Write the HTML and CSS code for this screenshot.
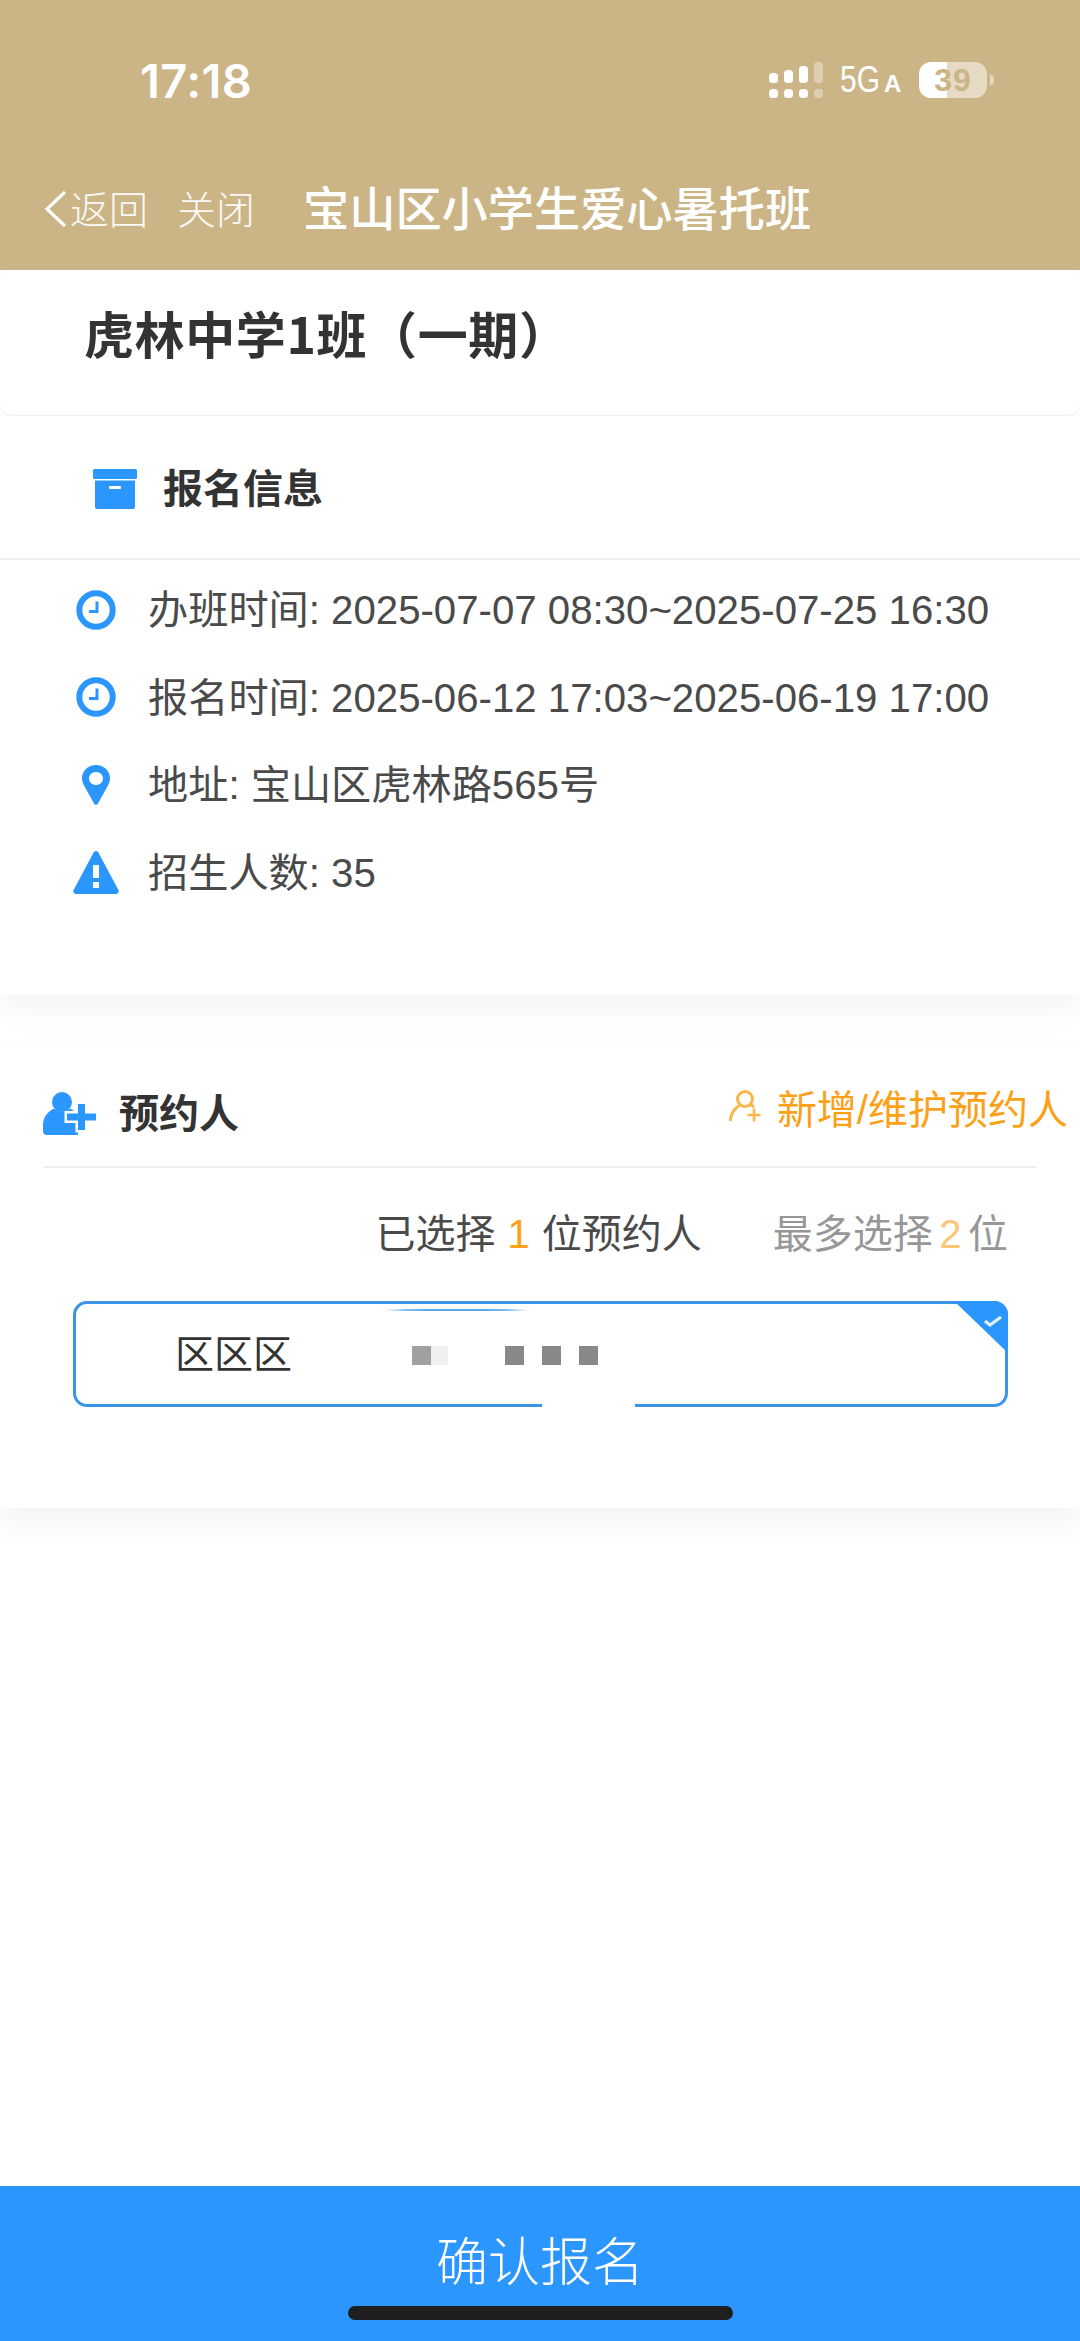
FILE: index.html
```html
<!DOCTYPE html>
<html lang="zh">
<head>
<meta charset="utf-8">
<title>宝山区小学生爱心暑托班</title>
<link rel="stylesheet" href="styles.css">
</head>
<body>
<div class="page">
  <header class="top">
    <div class="status">
      <span class="time">17:18</span>
      <div class="status-right">
        <svg class="signal" width="54" height="36" viewBox="0 0 54 36">
          <g fill="#fff">
            <rect x="0" y="11" width="9" height="10" rx="3.5"/><rect x="15" y="8" width="9" height="13" rx="3.5"/><rect x="30" y="4" width="9" height="17" rx="3.5"/>
            <rect x="0" y="27" width="9" height="9" rx="3.5"/><rect x="15" y="27" width="9" height="9" rx="3.5"/><rect x="30" y="27" width="9" height="9" rx="3.5"/>
          </g>
          <g fill="#fff" opacity=".35"><rect x="45" y="0" width="9" height="21" rx="3.5"/><rect x="45" y="27" width="9" height="9" rx="3.5"/></g>
        </svg>
        <span class="net"><span class="net-5g">5G</span><small>A</small></span>
        <span class="battery">39</span>
        <span class="tip"></span>
      </div>
    </div>
    <nav class="navbar">
      <svg class="chev" width="24" height="38" viewBox="0 0 24 38"><path d="M21 2 3 19l18 17" fill="none" stroke="#fff" stroke-width="3.2"/></svg>
      <span class="nav-link back">返回</span>
      <span class="nav-link close">关闭</span>
      <span class="nav-title">宝山区小学生爱心暑托班</span>
    </nav>
  </header>

  <section class="title-card"><h1>虎林中学1班（一期）</h1></section>

  <section class="info-card">
    <div class="info-head">
      <svg width="44" height="40" viewBox="0 0 44 40"><rect x="0" y="0" width="44" height="10" rx="1.5" fill="#2b96fd"/><path d="M2 11.500h40v26.500a2 2 0 0 1-2 2H4a2 2 0 0 1-2-2z" fill="#2b96fd"/><rect x="16" y="17" width="12" height="3" rx="1" fill="#fff"/></svg>
      <h2>报名信息</h2>
    </div>
    <ul class="rows">
      <li class="row">
        <span class="ico"><svg width="40" height="40" viewBox="0 0 40 40"><circle cx="20" cy="20" r="16.700" fill="none" stroke="#2b96fd" stroke-width="6"/><path d="M21 11.500v10H13" fill="none" stroke="#2b96fd" stroke-width="3"/></svg></span>
        <span class="row-text">办班时间: 2025-07-07 08:30~2025-07-25 16:30</span>
      </li>
      <li class="row">
        <span class="ico"><svg width="40" height="40" viewBox="0 0 40 40"><circle cx="20" cy="20" r="16.700" fill="none" stroke="#2b96fd" stroke-width="6"/><path d="M21 11.500v10H13" fill="none" stroke="#2b96fd" stroke-width="3"/></svg></span>
        <span class="row-text">报名时间: 2025-06-12 17:03~2025-06-19 17:00</span>
      </li>
      <li class="row">
        <span class="ico"><svg width="28" height="40" viewBox="0 0 28 40"><path fill-rule="evenodd" d="M14 0c7.700 0 14 5.800 14 13.200 0 3.400-1.300 6-3 9L16 38.500c-.9 1.800-3.100 1.800-4 0L3 22.200c-1.700-3-3-5.600-3-9C0 5.800 6.300 0 14 0zm0 7c-3.900 0-7 2.900-7 6.500s3.100 6.500 7 6.500 7-2.900 7-6.500S17.900 7 14 7z" fill="#2b96fd"/></svg></span>
        <span class="row-text">地址: 宝山区虎林路565号</span>
      </li>
      <li class="row">
        <span class="ico"><svg width="46" height="43" viewBox="0 0 46 43"><path fill-rule="evenodd" d="M23 0c1 0 1.800.6 2.400 1.600l20 37.400c.9 1.800-.2 4-2.200 4H2.800c-2 0-3.100-2.200-2.200-4l20-37.400C21.200.6 22 0 23 0zm-3 14v13h6V14zm0 17v6h6v-6z" fill="#2b96fd"/></svg></span>
        <span class="row-text">招生人数: 35</span>
      </li>
    </ul>
  </section>

  <section class="people-card">
    <div class="people-head">
      <div class="people-title">
        <svg width="54" height="44" viewBox="0 0 54 44"><circle cx="19" cy="10" r="10" fill="#2b96fd"/><path d="M4 43c-2.500 0-4-1.500-4-4v-6c0-8 5-13.500 11-16.500 4.500 4 11.500 4 16 0 3.500 1.500 6 4 8 7.500v19z" fill="#2b96fd"/><path d="M35 12h7v9.500h11v7H42V38h-7v-9.500H24v-7h11z" fill="#2b96fd" stroke="#fff" stroke-width="5" paint-order="stroke"/></svg>
        <h2>预约人</h2>
      </div>
      <div class="people-link">
        <svg width="34" height="34" viewBox="0 0 34 34"><g fill="none" stroke="#fbb64a" stroke-width="3"><circle cx="16" cy="9" r="7.500"/><path d="M10 15.500C5.500 18.500 2 24 1 31M22 15l3 2"/><path d="M25 18.500v13M18.500 25h13" stroke-width="2.600"/></g></svg>
        <span>新增/维护预约人</span>
      </div>
    </div>
    <div class="counts">
      <span class="count-a">已选择<b class="n1">1</b>位预约人</span>
      <span class="count-b">最多选择<b class="n2">2</b>位</span>
    </div>
    <div class="person">
      <span class="name">区区区</span>
      <span class="mask">
        <i class="sq half"></i><i class="sq faint"></i><i class="sq"></i><i class="sq"></i><i class="sq"></i>
      </span>
      <i class="smear"></i>
      <i class="erase"></i>
      <span class="corner"><svg width="54" height="52" viewBox="0 0 54 52"><path d="M0 0h40a14 14 0 0 1 14 14v38z" fill="#2b96fd"/><path d="M31 20l5 4 11-8" fill="none" stroke="#fff" stroke-opacity=".85" stroke-width="3.200"/></svg></span>
    </div>
  </section>

  <footer class="submit">
    <span>确认报名</span>
    <i class="home"></i>
  </footer>
</div>
</body>
</html>
```
FILE: styles.css
```css
* { box-sizing: border-box; }
html, body { margin: 0; padding: 0; background: #fff; }
body { font-family: "Liberation Sans", "Noto Sans CJK SC", sans-serif; color: #4a4a4a; }
h1, h2, ul { margin: 0; padding: 0; }
li { list-style: none; }

.page { width: 1080px; height: 2341px; display: flex; flex-direction: column; overflow: hidden; position: relative; }

.top { height: 270px; background: #cbb586; color: #fff; flex: none; }
.status { height: 160px; display: flex; justify-content: space-between; padding: 58px 86px 0 140px; }
.time { font-family: Inter, "Liberation Sans", sans-serif; font-size: 47px; font-weight: 600; line-height: 46px; letter-spacing: .4px; }
.status-right { display: flex; align-items: flex-start; height: 40px; padding-top: 1px; }
.signal { margin-top: 3px; }
.net { display: flex; align-items: baseline; font-size: 37px; line-height: 40px; margin-left: 17px; margin-top: 1px; width: 64px; }
.net-5g { display: inline-block; transform: scaleX(.81); transform-origin: left; width: 41px; }
.net small { font-size: 24px; font-weight: 700; margin-left: 3px; }
.battery { width: 68px; height: 36px; margin-left: 15px; margin-top: 3px; border-radius: 12px; background: linear-gradient(90deg, #fff 0 28px, #e5dac3 28px); color: #cbb586; font-size: 32px; font-weight: 700; line-height: 36px; text-align: center; letter-spacing: 1px; }
.tip { width: 4px; height: 10px; margin: 16px 0 0 3px; background: #e5dac3; border-radius: 0 5px 5px 0; }

.navbar { height: 110px; display: flex; align-items: flex-start; padding: 32px 0 0 44px; }
.chev { margin-top: -2px; }
.nav-link { font-family: "Noto Sans CJK SC", sans-serif; font-size: 39px; line-height: 38px; margin-top: -4px; opacity: .92; font-weight: 300; }
.back { margin-left: 2px; }
.close { margin-left: 29px; }
.nav-title { font-family: "Noto Sans CJK SC", sans-serif; font-size: 46.200px; line-height: 46px; font-weight: 500; margin-left: 48px; margin-top: -9px; }

.title-card { height: 145px; flex: none; padding: 37px 0 0 84px; border-radius: 12px; background: #fff; box-shadow: 0 1px 3px rgba(0,0,0,.08); position: relative; }
.title-card h1 { font-family: "Noto Sans CJK SC", sans-serif; font-size: 50px; line-height: 50px; font-weight: 600; letter-spacing: .6px; color: #333; }

.info-card { height: 579px; flex: none; margin-top: 1px; background: #fff; box-shadow: 0 12px 28px rgba(0,0,0,.05); position: relative; }
.info-head { height: 144px; display: flex; align-items: flex-start; padding: 53px 0 0 93px; border-bottom: 2px solid #eceef0; }
.info-head h2 { font-family: "Noto Sans CJK SC", sans-serif; font-size: 40px; line-height: 40px; font-weight: 700; color: #333; margin-left: 26px; margin-top: -3px; }
.rows { padding-top: 6px; }
.row { height: 87.500px; display: flex; align-items: center; font-size: 40.200px; }
.row-text { margin-bottom: 6px; }
.ico { width: 48px; margin-left: 72px; margin-right: 28px; display: flex; justify-content: center; flex: none; }

.people-card { height: 462px; flex: none; margin-top: 51px; background: #fff; box-shadow: 0 14px 30px rgba(0,0,0,.05); padding: 0 0 0 43px; position: relative; }
.people-head { width: 994px; height: 122px; border-bottom: 2px solid #eceef0; display: flex; justify-content: space-between; position: relative; padding-top: 46px; }
.people-title { display: flex; align-items: flex-start; }
.people-title h2 { font-family: "Noto Sans CJK SC", sans-serif; font-size: 40px; line-height: 44px; font-weight: 700; color: #333; margin-left: 22px; margin-top: -3px; }
.people-link { display: flex; align-items: flex-start; color: #fba118; font-size: 40px; line-height: 40px; margin-top: -2px; margin-right: -31px; }
.people-link svg { margin-right: 14px; margin-top: 0; }

.counts { width: 965px; display: flex; justify-content: flex-end; gap: 71px; font-size: 40px; line-height: 46px; padding-top: 43px; }
.count-a b { font-weight: 400; margin: 0 12px; }
.n1 { color: #fba118; }
.count-b { color: #979797; }
.n2 { color: #fcc678; font-weight: 400; margin: 0 6.500px; }

.person { width: 935px; height: 106px; margin: 44px 0 0 30px; border: 3px solid #3a94e8; border-radius: 14px; display: flex; align-items: center; position: relative; padding-left: 99px; }
.name { font-family: "Noto Sans CJK SC", sans-serif; font-size: 39px; line-height: 40px; color: #333; margin-top: -6px; }
.mask { display: flex; margin-left: 120px; margin-top: 2px; }
.sq { width: 19px; height: 19px; margin-right: 18px; background: #888; display: block; }
.sq.half { background: #a0a0a0; margin-right: 0; }
.sq.faint { background: #f0f0f0; margin-right: 57px; width: 17px; }
.smear { position: absolute; left: 307px; top: 5px; width: 147px; height: 2px; background: linear-gradient(90deg, rgba(90,170,240,0), #5aa8f0 15%, #5aa8f0 85%, rgba(90,170,240,0)); border-radius: 50%; }
.erase { position: absolute; left: 466px; bottom: -4px; width: 93px; height: 12px; background: #fff; border-radius: 50% 50% 0 0; }
.corner { position: absolute; right: -3px; top: -3px; display: block; height: 52px; }
.corner svg { display: block; }

.submit { margin-top: auto; height: 155px; flex: none; background: #2b96fd; color: #fff; display: flex; justify-content: center; position: relative; padding-top: 46px; font-family: "Noto Sans CJK SC", sans-serif; font-size: 52px; line-height: 54px; font-weight: 300; }
.home { position: absolute; left: 348px; top: 120px; width: 385px; height: 14px; background: #1f1f1f; border-radius: 7px; }
```
